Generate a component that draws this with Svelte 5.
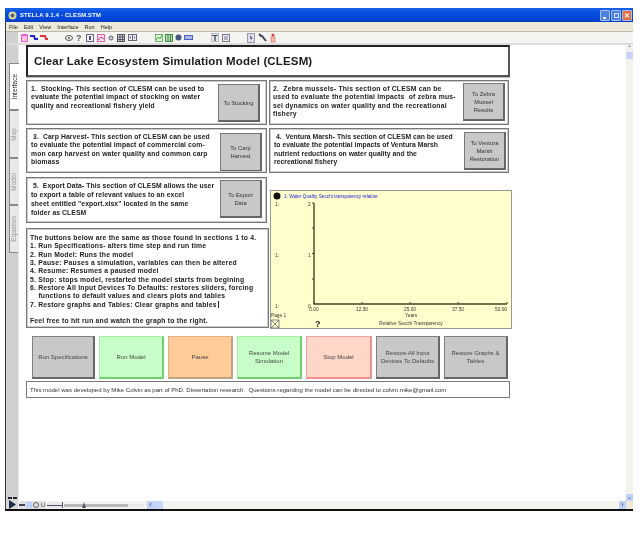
<script>
  const menus = ['File', 'Edit', 'View', 'Interface', 'Run', 'Help'];
  const tabs = [
    { name: 'Interface', active: true },
    { name: 'Map' },
    { name: 'Model' },
    { name: 'Equation' }
  ];
  const leftCards = [
    { cls: 'c1', lines: ['1.  Stocking- This section of CLESM can be used to', 'evaluate the potential impact of stocking on water', 'quality and recreational fishery yield'], btn: 'To Stocking' },
    { cls: 'c3', lines: [' 3.  Carp Harvest- This section of CLESM can be used', 'to evaluate the potential impact of commercial com-', 'mon carp harvest on water quality and common carp', 'biomass'], btn: 'To Carp Harvest' },
    { cls: 'c5', lines: [' 5.  Export Data- This section of CLESM allows the user', 'to export a table of relevant values to an excel', 'sheet entitled "export.xlsx" located in the same', 'folder as CLESM'], btn: 'To Export Data' }
  ];
  const rightCards = [
    { cls: 'c2', lines: ['2.  Zebra mussels- This section of CLESM can be', 'used to evaluate the potential impacts  of zebra mus-', 'sel dynamics on water quality and the recreational', 'fishery'], btn: 'To Zebra Mussel Results' },
    { cls: 'c4', lines: [' 4.  Ventura Marsh- This section of CLESM can be used', 'to evaluate the potential impacts of Ventura Marsh', 'nutrient reductions on water quality and the', 'recreational fishery'], btn: 'To Ventura Marsh Restoration' }
  ];
  const howTo = [
    'The buttons below are the same as those found in sections 1 to 4.',
    '1. Run Specifications- alters time step and run time',
    '2. Run Model: Runs the model',
    '3. Pause: Pauses a simulation, variables can then be altered',
    '4. Resume: Resumes a paused model',
    '5. Stop: stops model, restarted the model starts from begining',
    '6. Restore All Input Devices To Defaults: restores sliders, forcing',
    '    functions to default values and clears plots and tables',
    '7. Restore graphs and Tables: Clear graphs and tables'
  ];
  const actions = [
    { label: 'Run Specifications', kind: 'gray', w: 63 },
    { label: 'Run Model', kind: 'green', w: 65 },
    { label: 'Pause', kind: 'orange', w: 65 },
    { label: 'Resume Model Simulation', kind: 'green', w: 65 },
    { label: 'Stop Model', kind: 'pink', w: 66 },
    { label: 'Restore All Input Devices To Defaults', kind: 'gray', w: 64 },
    { label: 'Restore Graphs & Tables', kind: 'gray', w: 64 }
  ];
  const xTicks = [
    { x: 43, label: '0.00', anchor: 'middle' },
    { x: 91, label: '12.50', anchor: 'middle' },
    { x: 139, label: '25.00', anchor: 'middle' },
    { x: 187, label: '37.50', anchor: 'middle' },
    { x: 236, label: '50.00', anchor: 'end' }
  ];
</script>

<div class="window">
  <div class="titlebar">
    <svg class="app-icon" width="9" height="9" viewBox="0 0 9 9">
      <circle cx="4.5" cy="4.5" r="4" fill="#d8d890" />
      <circle cx="4.5" cy="4.5" r="2" fill="#506090" />
    </svg>
    <span class="title">STELLA 9.1.4 - CLESM.STM</span>
    <div class="controls">
      <span class="ctl blue"><i class="min"></i></span>
      <span class="ctl blue"><i class="max"></i></span>
      <span class="ctl red">✕</span>
    </div>
  </div>

  <div class="menubar">
    {#each menus as m}
      <span>{m}</span>
    {/each}
  </div>

  <div class="toolbar">
    <div class="tgroup g1">
      <svg width="7" height="8" viewBox="0 0 7 8"><rect x=".5" y="1" width="6" height="6.5" fill="#fbd" stroke="#e060d0" /><rect x="1" y="0" width="5" height="2" fill="#e060d0" /></svg>
      <svg width="8" height="8" viewBox="0 0 8 8"><path d="M0 2h4l1 3h3" fill="none" stroke="#2020d0" stroke-width="2" /></svg>
      <svg width="8" height="8" viewBox="0 0 8 8"><path d="M0 2h5l1 3h2" fill="none" stroke="#e03040" stroke-width="2" /></svg>
    </div>
    <div class="tgroup g2">
      <svg width="8" height="8" viewBox="0 0 8 8"><ellipse cx="4" cy="4" rx="3.5" ry="2.5" fill="none" stroke="#555" /><circle cx="4" cy="4" r="1" fill="#555" /></svg>
      <span class="q">?</span>
      <svg width="8" height="8" viewBox="0 0 8 8"><rect x=".5" y=".5" width="7" height="7" fill="#eef" stroke="#667" /><rect x="3" y="2" width="2" height="4" fill="#556" /></svg>
      <svg width="8" height="8" viewBox="0 0 8 8"><rect x=".5" y=".5" width="7" height="7" fill="#fde" stroke="#e060b0" /><path d="M1 6l3-3 3 2" fill="none" stroke="#d04070" /></svg>
      <svg width="6" height="6" viewBox="0 0 6 6"><circle cx="3" cy="3" r="2" fill="#ccd" stroke="#667" /></svg>
      <svg width="8" height="8" viewBox="0 0 8 8"><rect x=".5" y=".5" width="7" height="7" fill="#dde" stroke="#556" /><path d="M.5 3h7M.5 5.500h7M3 .5v7M5.500 .5v7" stroke="#556" /></svg>
      <svg width="9" height="7" viewBox="0 0 9 7"><rect x=".5" y=".5" width="8" height="6" fill="#eef" stroke="#667" /><path d="M4.500 .5v6" stroke="#667" /><rect x="2" y="2.500" width="1" height="2" fill="#667" /><rect x="6" y="2.500" width="1" height="2" fill="#667" /></svg>
    </div>
    <div class="tgroup g3">
      <svg width="8" height="8" viewBox="0 0 8 8"><rect x=".5" y=".5" width="7" height="7" fill="#dfd" stroke="#70b070" /><path d="M1 6l2-3 2 2 2-4" fill="none" stroke="#50a050" /></svg>
      <svg width="8" height="8" viewBox="0 0 8 8"><rect x=".5" y=".5" width="7" height="7" fill="#bdb" stroke="#409040" /><path d="M3 .5v7M5.500 .5v7" stroke="#409040" /></svg>
      <svg width="7" height="7" viewBox="0 0 7 7"><circle cx="3.500" cy="3.500" r="3" fill="#445a80" /></svg>
      <svg width="9" height="7" viewBox="0 0 9 7"><rect x=".5" y="1.500" width="8" height="4" fill="#aab8f0" stroke="#5060c0" /></svg>
    </div>
    <div class="tgroup g4">
      <span class="t">T</span>
      <svg width="8" height="8" viewBox="0 0 8 8"><rect x=".5" y=".5" width="7" height="7" fill="#eef" stroke="#778" /><path d="M2 3h4M2 5h4" stroke="#778" /></svg>
    </div>
    <div class="tgroup g5">
      <svg width="8" height="10" viewBox="0 0 8 10"><rect x=".5" y=".5" width="7" height="9" fill="#dde" stroke="#99a" /><path d="M3 2l2.500 4-1.500 0v2z" fill="#334" /></svg>
      <svg width="9" height="9" viewBox="0 0 9 9"><path d="M1 1l2 2 1 0 4 5" fill="none" stroke="#445" stroke-width="2" /></svg>
      <svg width="6" height="10" viewBox="0 0 6 10"><rect x="1" y="4" width="4" height="5" fill="#f6c0b0" stroke="#d06060" stroke-width=".6" /><circle cx="3" cy="2" r="1.500" fill="#d04040" /></svg>
    </div>
  </div>

  <div class="body">
    <div class="tabstrip">
      <div class="tabs">
        {#each tabs as t}
          <div class="tab" class:active={t.active}><span>{t.name}</span></div>
        {/each}
      </div>
      <div class="page-arrows"><i></i><i></i></div>
    </div>

    <div class="canvas">
      <h1 class="heading">Clear Lake Ecosystem Simulation Model (CLESM)</h1>

      <div class="columns">
        <div class="col left">
          {#each leftCards as c}
            <section class="card {c.cls}">
              <p>{#each c.lines as l}<span>{l}</span>{/each}</p>
              <button class="side-btn">{c.btn}</button>
            </section>
          {/each}
          <section class="card howto">
            <p>{#each howTo as l}<span>{l}</span>{/each}</p>
            <p class="feel">Feel free to hit run and watch the graph to the right.</p>
          </section>
        </div>

        <div class="col right">
          {#each rightCards as c}
            <section class="card {c.cls}">
              <p>{#each c.lines as l}<span>{l}</span>{/each}</p>
              <button class="side-btn">{c.btn}</button>
            </section>
          {/each}
          <div class="graph">
            <svg width="240" height="137" viewBox="0 0 240 137">
              <circle cx="6" cy="5" r="3.500" fill="#111" />
              <text x="13" y="7" class="legend">1: Water Quality Secchi transparency relative</text>
              <text x="4" y="15" class="tiny">1:</text>
              <text x="4" y="66" class="tiny">1:</text>
              <text x="4" y="117" class="tiny">1:</text>
              <text x="37" y="15" class="tiny">2</text>
              <text x="37" y="66" class="tiny">1</text>
              <text x="37" y="117" class="tiny">0</text>
              <path d="M43 12V113H236" fill="none" stroke="#444426" stroke-width="1.400" />
              <path d="M41 12h2M41 37h2M41 62.500h2M41 88h2" stroke="#444426" />
              {#each xTicks as t}
                <path d="M{t.x} 111v2" stroke="#444426" />
                <text x={t.x} y="120" class="tiny" text-anchor={t.anchor}>{t.label}</text>
              {/each}
              <text x="140" y="126" class="tiny" text-anchor="middle">Years</text>
              <text x="0" y="126" class="tiny">Page 1</text>
              <text x="140" y="134" class="tiny" text-anchor="middle">Relative Secchi Transparency</text>
              <text x="44" y="136" class="help">?</text>
              <path d="M0 129h8v8H0zM0 129l8 8M8 129l-8 8" fill="none" stroke="#667" stroke-width=".8" />
            </svg>
          </div>
        </div>
      </div>

      <div class="actions">
        {#each actions as a}
          <button class="action {a.kind}" style="width: {a.w}px">{a.label}</button>
        {/each}
      </div>

      <div class="credit">This model was developed by Mike Colvin as part of PhD. Dissertation research.  Questions regarding the model can be directed to colvin.mike@gmail.com</div>
    </div>

    <div class="vscroll">
      <span class="arrow">⌃</span>
      <span class="thumb"></span>
      <span class="grow"></span>
      <span class="arrow blue">⌄</span>
    </div>
  </div>

  <div class="statusbar">
    <div class="run">
      <svg width="10" height="11" viewBox="0 0 10 11"><path d="M2 1l7 4.500-7 4.500z" fill="#1c2c4c" /></svg>
    </div>
    <div class="status-tools">
      <span class="st ink"></span>
      <span class="st dot"></span>
      <span class="st lock"></span>
      <span class="st u">U</span>
    </div>
    <div class="slider1"><i></i></div>
    <div class="slider2"><i></i></div>
    <span class="h-arrow first">‹</span>
    <span class="h-thumb"></span>
    <span class="grow"></span>
    <span class="h-arrow">›</span>
    <span class="grip"></span>
  </div>
</div>

<style>
  :global(body) {
    background: #fff;
  }

  .window {
    width: 628px;
    height: 503px;
    margin: 8px 0 0 5px;
    display: flex;
    flex-direction: column;
    background: #fff;
    font-family: "Liberation Sans", Arial, sans-serif;
    border-left: 1px solid #333;
    border-bottom: 2px solid #111;
    box-sizing: border-box;
    filter: blur(0.45px);
  }

  .titlebar {
    height: 14px;
    flex: none;
    display: flex;
    align-items: center;
    padding-left: 3px;
    margin-left: -1px;
    background: linear-gradient(#1a62e8, #0a50e0 30%, #0346d8 75%, #0a3cc0);
  }

  .app-icon {
    flex: none;
  }

  .title {
    margin-left: 3px;
    color: #fff;
    font-size: 5.800px;
    font-weight: 700;
    letter-spacing: 0.2px;
    white-space: nowrap;
  }

  .controls {
    margin-left: auto;
    display: flex;
    gap: 1px;
    padding-right: 1px;
  }

  .ctl {
    width: 8px;
    height: 9px;
    position: relative;
    border: 1px solid #a8c0f0;
    border-radius: 1px;
    color: #fff;
    font-size: 7px;
    font-weight: 700;
    line-height: 9px;
    text-align: center;
  }

  .ctl.blue {
    background: #4a80e0;
  }

  .ctl.red {
    background: #e87040;
  }

  .ctl i {
    position: absolute;
    display: block;
    background: #fff;
  }

  .ctl .min {
    left: 2px;
    bottom: 1px;
    width: 3px;
    height: 2px;
  }

  .ctl .max {
    left: 2px;
    top: 2px;
    width: 3px;
    height: 3px;
    background: none;
    border: 1px solid #dde;
  }

  .menubar {
    height: 10px;
    flex: none;
    display: flex;
    gap: 6px;
    align-items: center;
    padding-left: 3px;
    background: #ece9d8;
    border-bottom: 1px solid #bdb9a6;
    font-size: 5.500px;
    color: #222;
    box-sizing: border-box;
  }

  .toolbar {
    height: 11px;
    flex: none;
    display: flex;
    align-items: center;
    padding-left: 15px;
    background: linear-gradient(to right, #d0d0d0 12px, #f4f4f0 12px);
    border-bottom: 2px solid #dcdcdc;
    box-sizing: content-box;
  }

  .tgroup {
    display: flex;
    align-items: center;
    gap: 2px;
  }

  .g2 {
    margin-left: 17px;
    gap: 3px;
  }

  .g3 {
    margin-left: 18px;
  }

  .g4 {
    margin-left: 18px;
    gap: 3px;
  }

  .g5 {
    margin-left: 17px;
    gap: 3px;
  }

  .q {
    font-size: 9px;
    font-weight: 700;
    color: #556;
    width: 7px;
  }

  .t {
    width: 8px;
    font-size: 9px;
    color: #445;
    background: #e4e8f0;
    text-align: center;
    line-height: 9px;
    border: 1px solid #bbc;
    box-sizing: border-box;
    height: 9px;
    font-weight: 700;
  }

  .body {
    flex: 1;
    min-height: 0;
    display: flex;
  }

  .tabstrip {
    width: 12px;
    flex: none;
    background: #d0d0d0;
    display: flex;
    flex-direction: column;
    border-right: 1px solid #e8e8e8;
    box-sizing: content-box;
  }

  .tabs {
    margin-top: 18px;
    padding-left: 3px;
    flex: 1;
  }

  .tab {
    height: 47.700px;
    background: #e8e8e8;
    border: 1px solid #888;
    border-right: none;
    box-sizing: border-box;
    display: flex;
    justify-content: center;
    align-items: center;
    color: #999;
    font-size: 6.500px;
  }

  .tab.active {
    background: #fff;
    color: #222;
    height: 47px;
    margin-right: -1px;
  }

  .tab span {
    writing-mode: vertical-rl;
    transform: rotate(180deg);
    line-height: 8px;
  }

  .page-arrows {
    display: flex;
    justify-content: center;
    gap: 1px;
    height: 4px;
  }

  .page-arrows i {
    width: 4px;
    height: 3px;
    background: #223;
  }

  .canvas {
    flex: 1;
    min-width: 0;
    padding-left: 7px;
    display: flex;
    flex-direction: column;
  }

  .heading {
    width: 484px;
    height: 32px;
    margin: 0;
    padding-left: 6px;
    box-sizing: border-box;
    border: 2px solid #222;
    border-right-color: #555;
    border-bottom-color: #555;
    box-shadow: 0 1px 0 #bbb;
    display: flex;
    align-items: center;
    font-size: 11.500px;
    font-weight: 700;
    letter-spacing: 0.15px;
    color: #1c1c1c;
  }

  .columns {
    display: flex;
    margin-top: 3px;
  }

  .col {
    display: flex;
    flex-direction: column;
    width: 243px;
  }

  .card {
    box-sizing: border-box;
    border: 1px solid #777;
    outline: 1px solid #ccc;
    outline-offset: -2px;
    background: #fff;
    display: flex;
    justify-content: space-between;
    padding-top: 3px;
    font-size: 6.800px;
    font-weight: 700;
    color: #222;
  }

  .card p {
    margin: 1px 0 0;
    line-height: 8.300px;
    white-space: pre;
  }

  .card p span {
    display: block;
  }

  .c1 {
    width: 241px;
    height: 45px;
    padding: 3px 6px 0 4px;
  }

  .c1 p {
    letter-spacing: 0.16px;
  }

  .c3 {
    width: 241px;
    height: 45px;
    margin-top: 3px;
    padding: 3px 4px 0 4px;
  }

  .c3 p {
    letter-spacing: 0.12px;
  }

  .c3 .side-btn {
    margin-top: 1px;
    height: 39px;
  }

  .c5 {
    width: 241px;
    height: 46px;
    margin-top: 4px;
    padding: 2px 4px 0 4px;
  }

  .c5 p {
    letter-spacing: 0.09px;
    line-height: 9px;
  }

  .c2 {
    width: 240px;
    height: 45px;
    padding: 2px 3px 0 3px;
  }

  .c2 p {
    letter-spacing: 0.22px;
    margin-top: 2px;
  }

  .c4 {
    width: 240px;
    height: 45px;
    margin-top: 3px;
    padding: 3px 2px 0 4px;
  }

  .c4 p {
    letter-spacing: 0.03px;
  }

  .howto {
    width: 243px;
    height: 100px;
    margin-top: 5px;
    padding: 4px 3px 0 3px;
    display: block;
  }

  .howto p {
    letter-spacing: 0.21px;
    line-height: 8.350px;
  }

  .howto p span:last-child::after {
    content: '';
    display: inline-block;
    width: 1px;
    height: 7px;
    margin-left: 1px;
    vertical-align: -1px;
    background: #222;
  }

  .howto .feel {
    margin-top: 8px;
  }

  .side-btn {
    flex: none;
    width: 42px;
    height: 38px;
    padding: 0 2px;
    background: #c8c8c8;
    border: 1px solid #777;
    border-right: 2px solid #666;
    border-bottom: 2px solid #666;
    font-family: inherit;
    font-size: 5.800px;
    line-height: 8px;
    color: #333;
  }

  .graph {
    width: 242px;
    height: 139px;
    margin: 17px 0 0 1px;
    background: #ffffcc;
    border: 1px solid #999;
    box-sizing: border-box;
  }

  .graph svg {
    display: block;
  }

  .legend {
    font-size: 4.700px;
    fill: #2020e0;
  }

  .tiny {
    font-size: 4.800px;
    fill: #333;
  }

  .help {
    font-size: 9px;
    font-weight: 700;
    fill: #222;
  }

  .actions {
    display: flex;
    margin: 7px 0 0 6px;
    gap: 4px;
    height: 43px;
  }

  .action {
    height: 43px;
    padding: 0 3px;
    box-sizing: border-box;
    font-family: inherit;
    font-size: 6px;
    line-height: 8px;
    color: #444;
    border-style: solid;
    border-width: 1px 2px 2px 1px;
  }

  .gray {
    background: #c8c8c8;
    border-color: #808080 #666 #666 #808080;
  }

  .green {
    background: #c8ffc8;
    border-color: #a0f0a0 #70d070 #70d070 #a0f0a0;
  }

  .orange {
    background: #ffcc99;
    border-color: #e0b080 #c0a080 #c0a080 #e0b080;
  }

  .pink {
    background: #ffd6c8;
    border-color: #f0a0a0 #f09090 #f09090 #f0a0a0;
  }

  .credit {
    width: 484px;
    height: 17px;
    margin: 2px 0 0 0;
    padding-left: 3px;
    box-sizing: border-box;
    border: 1px solid #777;
    display: flex;
    align-items: center;
    font-size: 6.050px;
    color: #333;
    white-space: pre;
  }

  .vscroll {
    width: 7px;
    flex: none;
    display: flex;
    flex-direction: column;
    background: #f4f4ee;
  }

  .arrow {
    height: 7px;
    font-size: 6px;
    line-height: 7px;
    text-align: center;
    color: #445;
    background: #f0f0f0;
  }

  .arrow.blue {
    background: #c0d0f8;
  }

  .thumb {
    height: 7px;
    background: #c8d4f8;
  }

  .grow {
    flex: 1;
  }

  .statusbar {
    height: 8px;
    flex: none;
    display: flex;
    align-items: center;
    background: #f4f4ee;
  }

  .run {
    width: 12px;
    height: 10px;
    margin-top: -3px;
    flex: none;
    background: #d8d8d8;
    display: flex;
    justify-content: center;
  }

  .status-tools {
    display: flex;
    gap: 1px;
    align-items: center;
    margin-left: 1px;
    background: #e0e0e0;
    height: 8px;
  }

  .st {
    width: 6px;
    height: 6px;
    display: block;
    font-size: 6px;
    line-height: 6px;
    text-align: center;
    color: #445;
  }

  .st.ink {
    background: linear-gradient(#e0e0e0 35%, #445 35%, #445 65%, #e0e0e0 65%);
  }

  .st.dot {
    background: #c0d0f8;
  }

  .st.lock {
    border: 1px solid #667;
    border-radius: 50%;
    box-sizing: border-box;
  }

  .slider1 {
    width: 15px;
    height: 6px;
    margin-left: 1px;
    position: relative;
    background: #e8e8ee;
    border-right: 1px solid #556;
  }

  .slider1 i {
    position: absolute;
    left: 0;
    right: 0;
    top: 3px;
    height: 1px;
    background: #556;
  }

  .slider2 {
    width: 64px;
    height: 3px;
    margin-left: 1px;
    position: relative;
    background: #b8b8b8;
    border-right: 16px solid #e8e8e8;
  }

  .slider2 i {
    position: absolute;
    left: 18px;
    top: -2px;
    width: 0;
    height: 0;
    border-left: 2px solid transparent;
    border-right: 2px solid transparent;
    border-bottom: 6px solid #556;
  }

  .h-arrow {
    width: 7px;
    height: 8px;
    background: #c0d0f8;
    color: #334;
    font-size: 7px;
    line-height: 7px;
    text-align: center;
    flex: none;
  }

  .h-arrow.first {
    margin-left: 3px;
  }

  .h-thumb {
    width: 9px;
    height: 8px;
    background: #c8d4f8;
    flex: none;
  }

  .grip {
    width: 7px;
    height: 8px;
    background: #ecead8;
    flex: none;
  }
</style>
